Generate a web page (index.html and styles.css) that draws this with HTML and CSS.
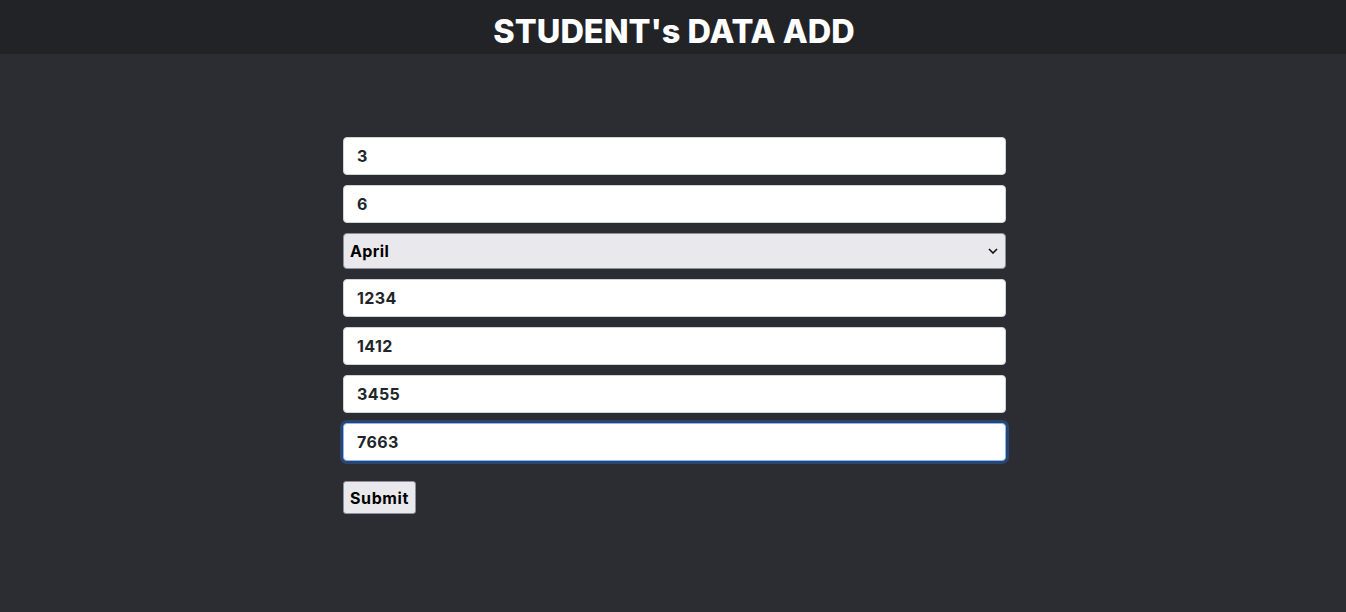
FILE: index.html
```html
<!DOCTYPE html>
<html>
<head>
<meta charset="utf-8">
<link rel="stylesheet" href="styles.css">
</head>
<body>
<header class="top">
  <h1 class="title">STUDENT's DATA ADD</h1>
</header>
<main class="page">
  <form class="form">
    <input class="field" type="text" value="3">
    <input class="field" type="text" value="6">
    <div class="picker-wrap">
      <select class="picker">
        <option>April</option>
      </select>
      <svg class="chev" width="10" height="6" viewBox="0 0 10 6"><path d="M1 1l4 4 4-4" fill="none" stroke="#111" stroke-width="1.6"/></svg>
    </div>
    <input class="field" type="text" value="1234">
    <input class="field" type="text" value="1412">
    <input class="field" type="text" value="3455">
    <input class="field field-focus" type="text" value="7663" autofocus>
    <div class="actions"><button class="submit" type="button">Submit</button></div>
  </form>
</main>
</body>
</html>
```
FILE: styles.css
```css
* { box-sizing: border-box; }
html, body { margin: 0; padding: 0; }
body {
  background: #2b2d32;
  font-family: Inter, "Liberation Sans", sans-serif;
  height: 612px;
  overflow: hidden;
}
.top {
  background: #212327;
  height: 54px;
  display: flex;
  justify-content: center;
  align-items: flex-end;
}
.title {
  margin: 0;
  color: #ffffff;
  font-size: 32.5px;
  font-weight: 800;
  line-height: 40px;
  padding-bottom: 2px;
  padding-left: 2px;
}
.page {
  display: flex;
  justify-content: center;
  padding-top: 83px;
  padding-left: 3px;
}
.form {
  width: 663px;
  display: flex;
  flex-direction: column;
  gap: 10px;
}
.field {
  height: 38px;
  width: 100%;
  border: 1px solid #ced4da;
  border-radius: 4px;
  background: #ffffff;
  color: #212529;
  font-family: inherit;
  font-size: 16px;
  font-weight: 700;
  letter-spacing: 0.4px;
  padding: 0 13px;
  outline: none;
}
.field-focus {
  border-color: #86b7fe;
  box-shadow: 0 0 0 3px #2a4670;
  caret-color: #000;
}
.picker-wrap {
  position: relative;
  height: 36px;
}
.picker {
  appearance: none;
  -webkit-appearance: none;
  height: 36px;
  width: 100%;
  border: 1px solid #8f8f9d;
  border-radius: 4px;
  background: #e9e9ed;
  color: #000;
  font-family: inherit;
  font-size: 16px;
  font-weight: 700;
  letter-spacing: 0.4px;
  padding: 0 6px;
}
.chev {
  position: absolute;
  right: 8px;
  top: 15px;
  pointer-events: none;
}
.actions {
  padding-top: 10px;
}
.submit {
  height: 33px;
  padding: 0 6px;
  border: 1px solid #8f8f9d;
  border-radius: 3px;
  background: #e9e9ed;
  color: #000;
  font-family: inherit;
  font-size: 16px;
  font-weight: 700;
  letter-spacing: 0.6px;
}
```
